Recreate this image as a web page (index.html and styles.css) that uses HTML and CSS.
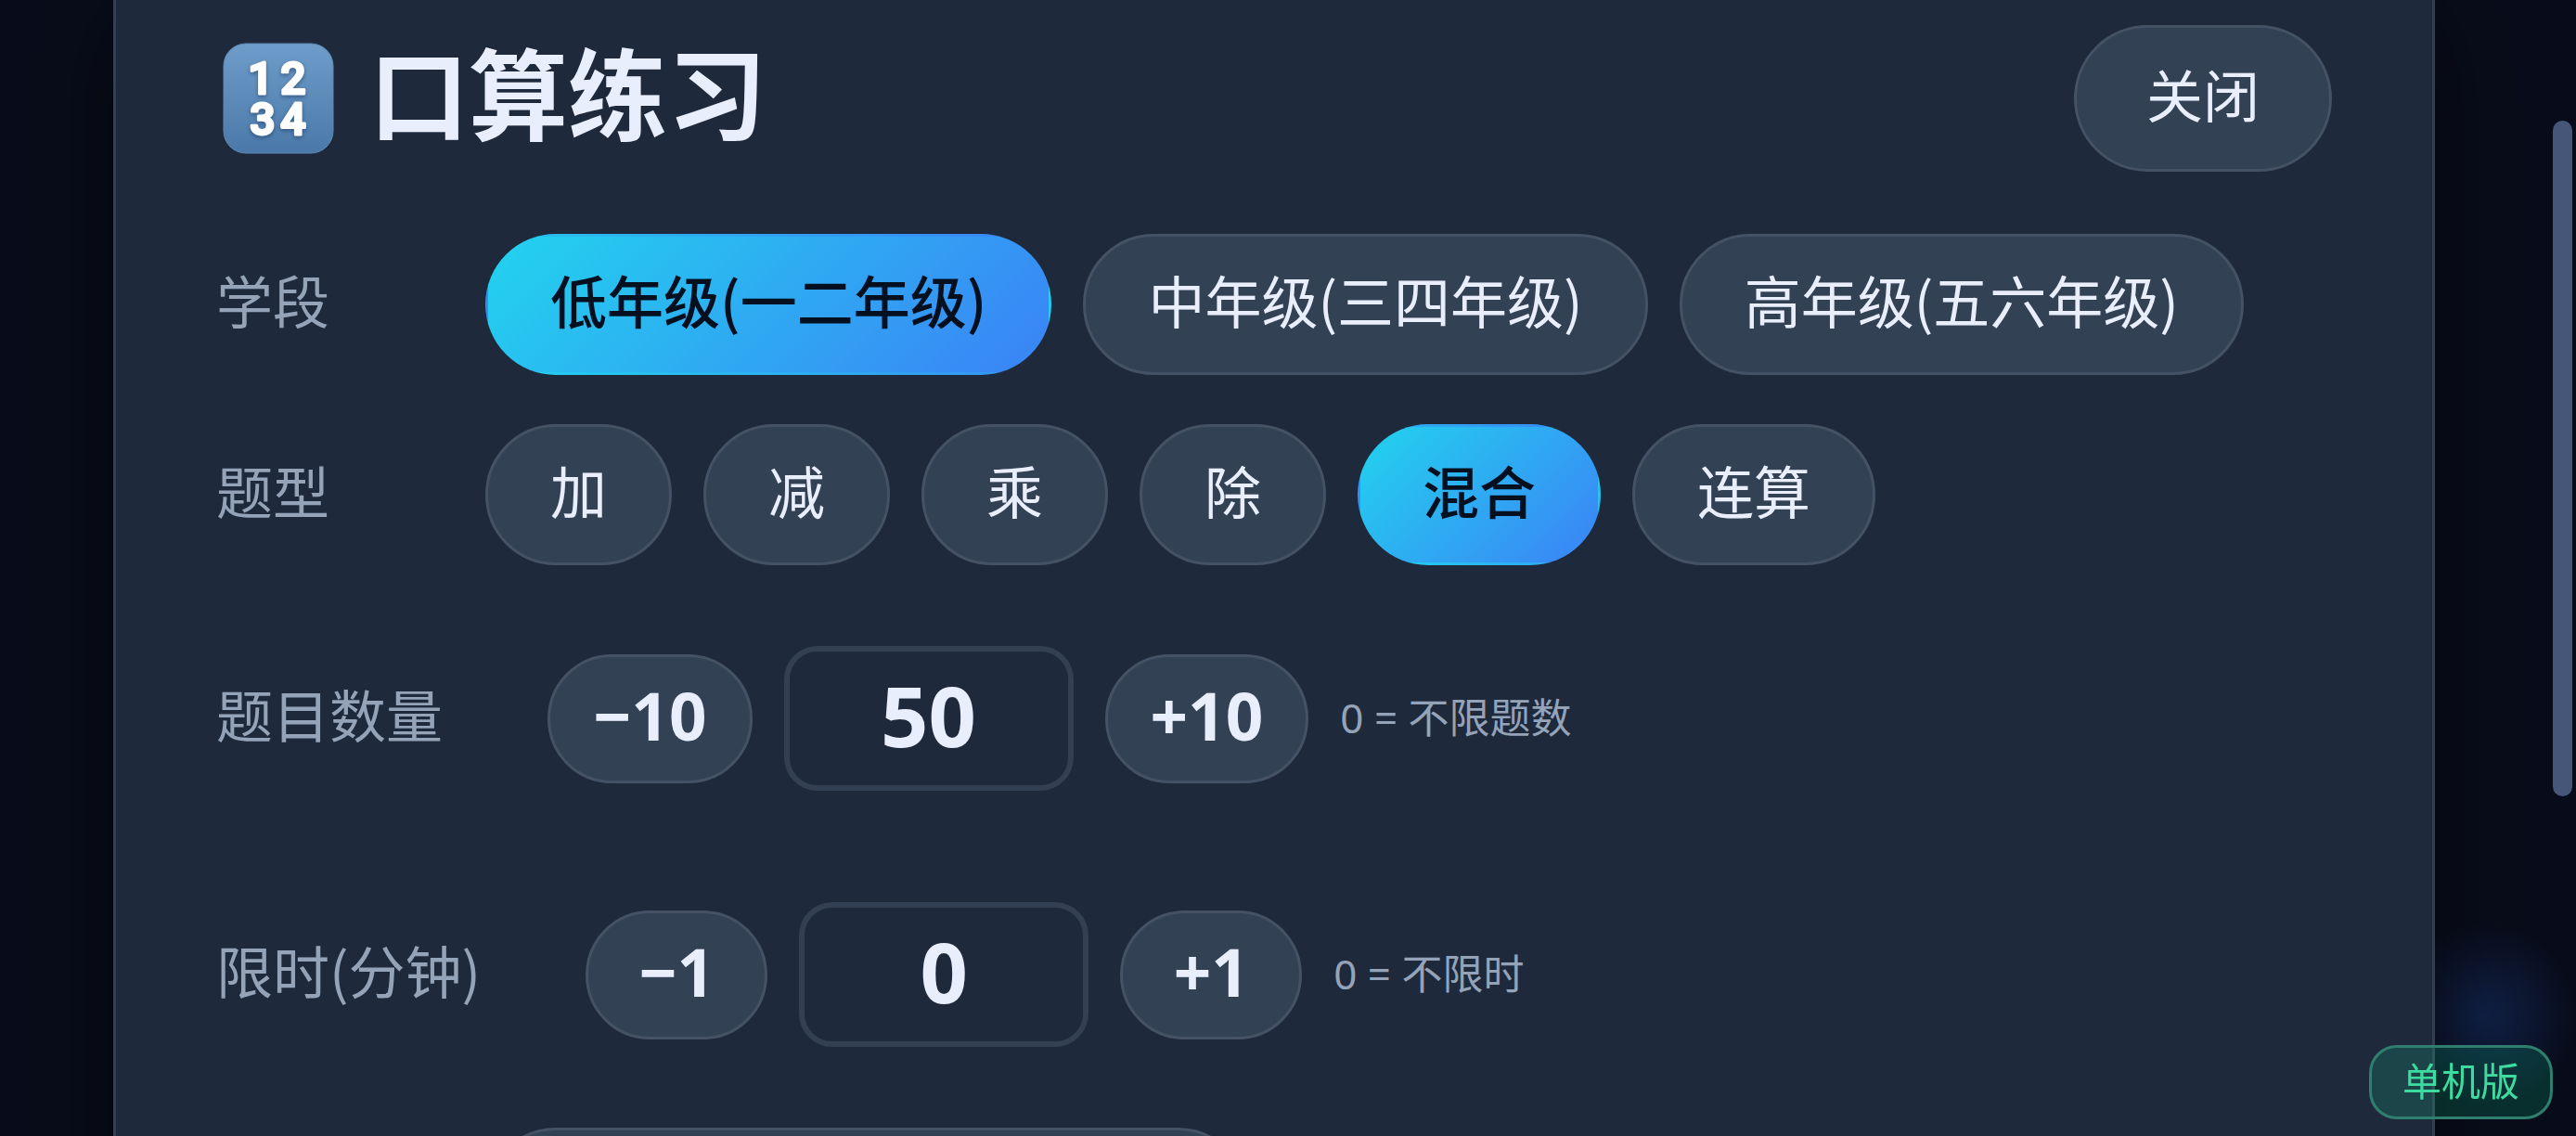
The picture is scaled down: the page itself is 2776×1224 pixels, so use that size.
FILE: index.html
```html
<!DOCTYPE html>
<html lang="zh-CN">
<head>
	<meta charset="UTF-8">
	<meta name="viewport" content="width=device-width, initial-scale=1">
	<title>口算练习</title>
	<link rel="stylesheet" href="styles.css">
</head>
<body>
	<main class="panel">
		<header class="header">
			<h1 class="title">
				<svg class="titleIcon" viewBox="0 0 120 120" aria-hidden="true">
					<defs>
						<linearGradient id="tile" x1="0" y1="0" x2="0" y2="1">
							<stop offset="0" stop-color="#6f9dca" />
							<stop offset="1" stop-color="#4a78a8" />
						</linearGradient>
					</defs>
					<rect x="1" y="1" width="118" height="118" rx="24" fill="url(#tile)" stroke="#5f8ab5" stroke-width="1" />
					<g class="tileDigits">
						<text x="41" y="55">1</text>
						<text x="76" y="55">2</text>
						<text x="43" y="99">3</text>
						<text x="76" y="99">4</text>
					</g>
				</svg>
				<span class="titleText">口算练习</span>
			</h1>
			<button class="chip closeBtn" type="button">关闭</button>
		</header>
		<div class="row" role="group" aria-labelledby="gradeLabel">
			<span class="label" id="gradeLabel">学段</span>
			<div class="chips">
				<button class="chip active" type="button">低年级(一二年级)</button>
				<button class="chip" type="button">中年级(三四年级)</button>
				<button class="chip" type="button">高年级(五六年级)</button>
			</div>
		</div>
		<div class="row" role="group" aria-labelledby="typeLabel">
			<span class="label" id="typeLabel">题型</span>
			<div class="chips">
				<button class="chip" type="button">加</button>
				<button class="chip" type="button">减</button>
				<button class="chip" type="button">乘</button>
				<button class="chip" type="button">除</button>
				<button class="chip active" type="button">混合</button>
				<button class="chip" type="button">连算</button>
			</div>
		</div>
		<div class="row numberRow">
			<label class="label" for="countInput">题目数量</label>
			<div class="chips">
				<button class="chip step" type="button">−10</button>
				<input class="numberInput" id="countInput" type="text" inputmode="numeric" value="50">
				<button class="chip step" type="button">+10</button>
				<span class="hint">0 = 不限题数</span>
			</div>
		</div>
		<div class="row numberRow">
			<label class="label" for="timeInput">限时(分钟)</label>
			<div class="chips">
				<button class="chip step" type="button">−1</button>
				<input class="numberInput" id="timeInput" type="text" inputmode="numeric" value="0">
				<button class="chip step" type="button">+1</button>
				<span class="hint">0 = 不限时</span>
			</div>
		</div>
		<div class="row">
			<span class="label"></span>
			<button class="chip wide" type="button" aria-label="更多"></button>
		</div>
	</main>
	<div class="scrollThumb"></div>
	<div class="badge">单机版</div>
</body>
</html>
```
FILE: styles.css
```css
* {
	box-sizing: border-box;
}
html {
	height: 100%;
	overflow: hidden;
}
body {
	height: 100%;
	margin: 0;
	padding: 0 152px 0 122px;
	overflow: hidden;
	background-color: #090d1b;
	background-image: radial-gradient(circle at right 100px bottom 130px, #11224a 0, rgba(17, 34, 74, 0) 100px);
	color: #e8eefc;
	font-family: "Noto Sans CJK SC", "Noto Sans", sans-serif;
	font-size: 61px;
}
button,
input {
	font-family: inherit;
	color: inherit;
}
.panel {
	min-height: 100%;
	padding: 27px 108px 0;
	border: 3px solid #333f52;
	border-width: 0 3px;
	background-color: #1e293b;
	box-shadow: 0 0 120px rgba(0, 0, 0, 0.5);
}
.header {
	display: flex;
	align-items: center;
	justify-content: space-between;
	margin-bottom: 67px;
}
.title {
	display: flex;
	align-items: center;
	gap: 38px;
	margin: 0;
	padding-left: 7px;
	font-size: 107px;
	line-height: 120px;
}
.titleText {
	padding-bottom: 18px;
}
.titleIcon {
	width: 120px;
	height: 120px;
}
.tileDigits {
	fill: #fff;
	stroke: #fff;
	stroke-width: 3px;
	stroke-linejoin: round;
	font-family: Roboto, sans-serif;
	font-size: 48px;
	font-weight: 500;
	text-anchor: middle;
	filter: drop-shadow(0 2px 2px rgba(30, 60, 100, 0.6));
}
.row {
	display: flex;
	align-items: center;
	gap: 34px;
	margin-bottom: 53px;
}
.label {
	flex: none;
	min-width: 256px;
	padding-bottom: 10px;
	color: #94a3b8;
	line-height: 80px;
}
.chips {
	display: flex;
	flex-wrap: wrap;
	align-items: center;
	gap: 34px;
}
.chip {
	height: 152px;
	padding: 0 67px 10px;
	border: 3px solid #455266;
	border-radius: 76px;
	background-color: #334155;
	font-size: 61px;
	line-height: 80px;
	cursor: pointer;
}
.chip.active {
	border-color: transparent;
	background-color: transparent;
	background-image: linear-gradient(135deg, #22d3ee, #3b82f6);
	color: #04101f;
	font-weight: 500;
}
.closeBtn {
	height: 158px;
	padding: 0 75px 10px;
	border-radius: 79px;
}
.numberRow {
	gap: 113px;
	margin: 87px 0 120px;
}
.numberRow + .numberRow {
	margin: 0 0 87px;
}
.numberRow .label {
	min-width: 0;
}
.step {
	height: 139px;
	min-width: 196px;
	padding: 0 46px 6px;
	border-radius: 70px;
	font-family: "Noto Sans", sans-serif;
	font-size: 71px;
	font-weight: bold;
}
.numberInput {
	width: 312px;
	height: 156px;
	padding: 0 24px 8px;
	border: 6px solid #333f52;
	border-radius: 36px;
	background-color: #1e293b;
	font-family: "Noto Sans", sans-serif;
	font-size: 90px;
	font-weight: bold;
	text-align: center;
}
.hint {
	padding-bottom: 6px;
	color: #94a3b8;
	font-family: "Noto Sans", "Noto Sans CJK SC", sans-serif;
	font-size: 44px;
}
.wide {
	width: 822px;
}
.scrollThumb {
	position: fixed;
	top: 130px;
	right: 4px;
	width: 21px;
	height: 728px;
	border-radius: 11px;
	background-color: #465679;
}
.badge {
	position: fixed;
	right: 25px;
	bottom: 18px;
	padding: 0 33px 6px;
	border: 3px solid #2f7f6e;
	border-radius: 30px;
	background-color: rgba(16, 185, 129, 0.2);
	color: #3edba0;
	font-size: 42px;
	line-height: 68px;
}
```
